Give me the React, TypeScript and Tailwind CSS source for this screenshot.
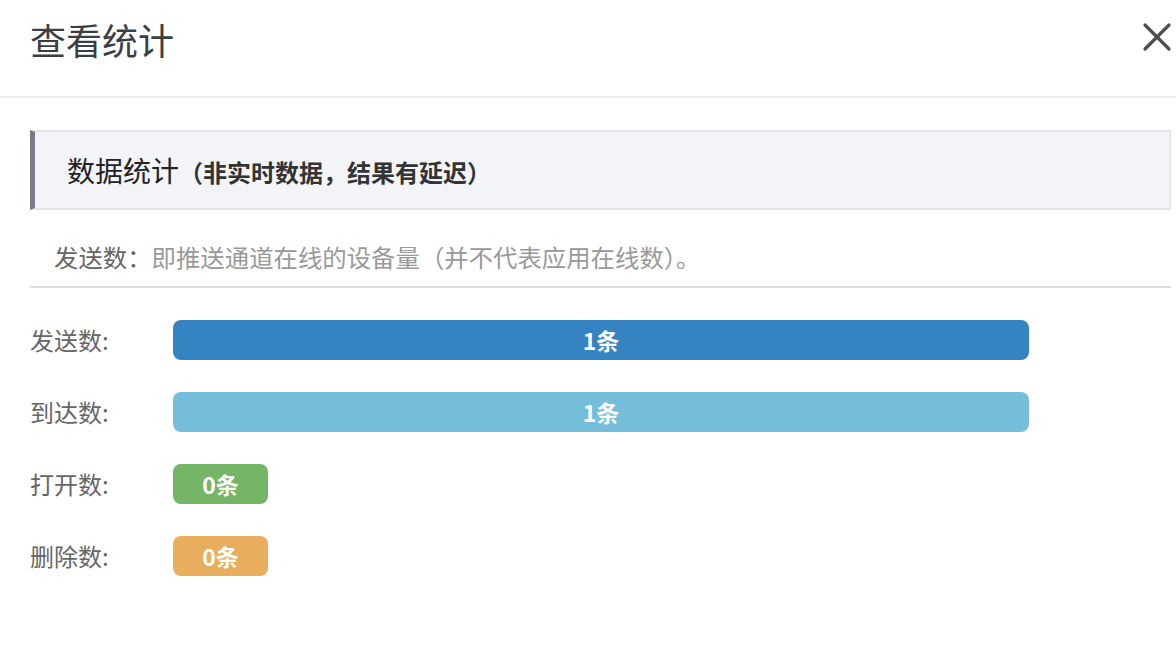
import React from 'react'

const rows = [
  { label: '发送数:', value: '1条', width: 'w-[856px]', color: 'bg-[#3583c1]' },
  { label: '到达数:', value: '1条', width: 'w-[856px]', color: 'bg-[#74bddb]' },
  { label: '打开数:', value: '0条', width: 'w-[95px]', color: 'bg-[#74b566]' },
  { label: '删除数:', value: '0条', width: 'w-[95px]', color: 'bg-[#e8ae5e]' },
]

export default function App() {
  return (
    <div className="h-[646px] w-[1176px] overflow-hidden bg-white font-['Noto_Sans_CJK_SC',sans-serif]">
      <header className="flex h-[98px] items-start justify-between border-b-2 border-[#eeeeee] pl-[30px] pr-[4px] pt-[12px]">
        <h1 className="text-[36px] leading-[54px] text-[#3b3f44]">查看统计</h1>
        <button className="mt-[10px] text-[#4b4f53]" aria-label="关闭">
          <svg width="30" height="30" viewBox="0 0 30 30" fill="none" stroke="currentColor" strokeWidth="3.2" strokeLinecap="round">
            <path d="M3 3 L27 27" />
            <path d="M27 3 L3 27" />
          </svg>
        </button>
      </header>

      <section className="pl-[30px] pr-[5px] pt-[32px]">
        <div className="flex h-[80px] items-center border-2 border-l-[5px] border-[#e2e4e9] border-l-[#7b7a8c] bg-[#f3f4f8] pl-[32px]">
          <h2 className="text-[28px] text-[#222222]">
            数据统计
            <span className="text-[24px] font-semibold text-[#333333]">（非实时数据，结果有延迟）</span>
          </h2>
        </div>

        <div className="border-b-2 border-[#dddddd] pb-[11px] pl-[24px] pt-[29px] text-[24.4px] leading-[36px]">
          <span className="text-[#666666]">发送数：</span>
          <span className="text-[#999999]">即推送通道在线的设备量（并不代表应用在线数）。</span>
        </div>
      </section>

      <section className="flex flex-col gap-[32px] pl-[30px] pt-[32px]">
        {rows.map((row) => (
          <div key={row.label} className="flex items-center">
            <span className="w-[143px] text-[24px] text-[#666666]">{row.label}</span>
            <div className={`flex h-[40px] items-center justify-center rounded-[8px] text-[23px] font-bold text-white ${row.width} ${row.color}`}>
              {row.value}
            </div>
          </div>
        ))}
      </section>
    </div>
  )
}
